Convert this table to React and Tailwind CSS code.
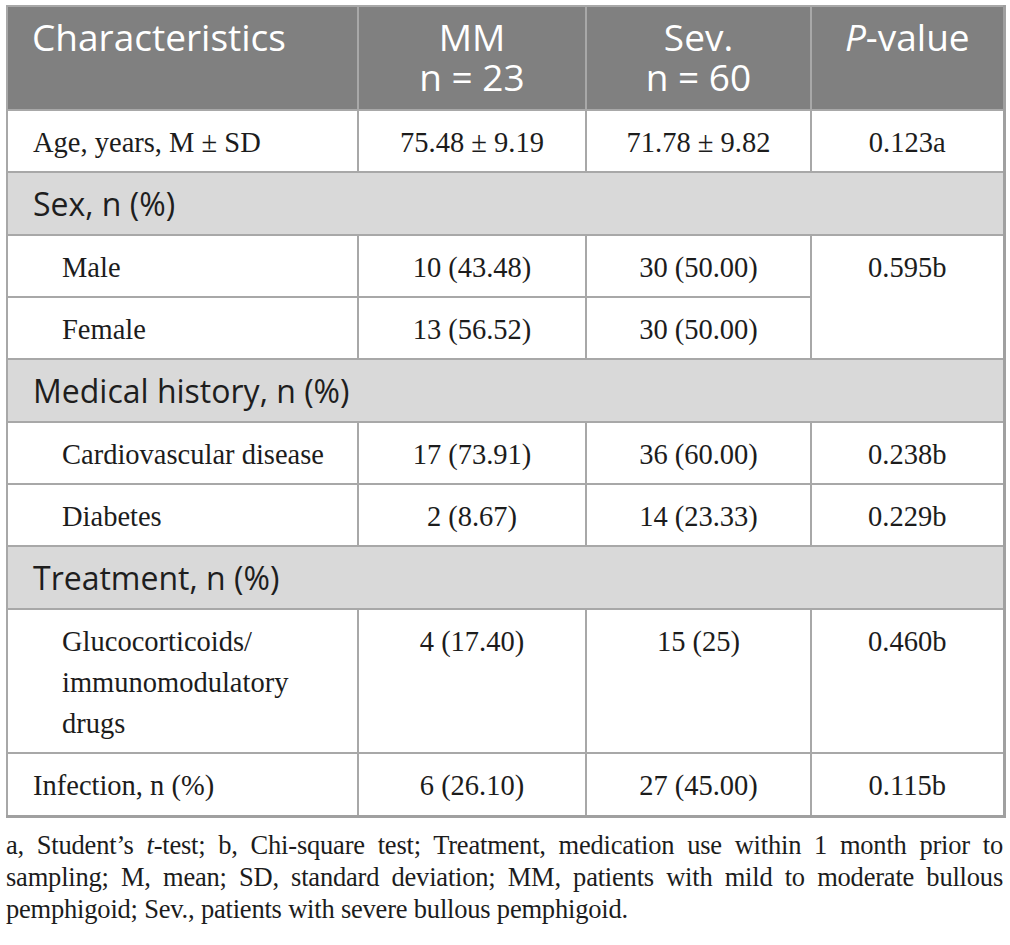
import React from 'react';

const sans = { fontFamily: '"Open Sans", "Noto Sans", sans-serif' };

const rows = [
    { type: 'row', label: 'Age, years, M \u00b1 SD', mm: '75.48 \u00b1 9.19', sev: '71.78 \u00b1 9.82', p: '0.123a' },
    { type: 'section', label: 'Sex, n (%)' },
    { type: 'row', label: 'Male', sub: true, mm: '10 (43.48)', sev: '30 (50.00)', p: '0.595b', span: 2 },
    { type: 'row', label: 'Female', sub: true, mm: '13 (56.52)', sev: '30 (50.00)', skipP: true },
    { type: 'section', label: 'Medical history, n (%)' },
    { type: 'row', label: 'Cardiovascular disease', sub: true, mm: '17 (73.91)', sev: '36 (60.00)', p: '0.238b' },
    { type: 'row', label: 'Diabetes', sub: true, mm: '2 (8.67)', sev: '14 (23.33)', p: '0.229b' },
    { type: 'section', label: 'Treatment, n (%)' },
    { type: 'row', label: 'Glucocorticoids/ immunomodulatory drugs', sub: true, mm: '4 (17.40)', sev: '15 (25)', p: '0.460b' },
    { type: 'row', label: 'Infection, n (%)', mm: '6 (26.10)', sev: '27 (45.00)', p: '0.115b', last: true },
];

const cell = 'border-2 border-[#a8a8a8] align-top pt-[11px] leading-[41px]';
const head = 'border-2 border-[#a8a8a8] font-normal align-top pt-[10px] pb-[12px]';

const App = () => {
    return (
        <div className="bg-white min-h-screen pt-[5px] pl-[6px] pr-[7px] text-[#1c1c1c]">
            <table
                className="table-fixed border-collapse w-[997px] border-r-[3px] border-b-[3px] border-[#a0a0a0] text-[28.5px]"
                style={{ fontFamily: '"Liberation Serif", serif' }}
            >
                <colgroup>
                    <col className="w-[351px]" />
                    <col className="w-[228px]" />
                    <col className="w-[225px]" />
                    <col className="w-[193px]" />
                </colgroup>
                <thead>
                    <tr className="bg-[#808080] text-white text-[37px] leading-[40px]" style={sans}>
                        <th className={`${head} text-left pl-[24px]`}>Characteristics</th>
                        <th className={`${head} text-center`}>MM<br />n = 23</th>
                        <th className={`${head} text-center`}>Sev.<br />n = 60</th>
                        <th className={`${head} text-center`}><i>P</i>-value</th>
                    </tr>
                </thead>
                <tbody>
                    {rows.map((r, i) =>
                        r.type === 'section' ? (
                            <tr key={i} className="bg-[#d9d9d9]">
                                <td colSpan={4} className="border-2 border-[#a8a8a8] pl-[25px] pt-[10px] pb-[10px] leading-[41px] text-[32px] text-[#1e1e1e]" style={sans}>
                                    {r.label}
                                </td>
                            </tr>
                        ) : (
                            <tr key={i}>
                                <td className={`${cell} ${r.last ? 'pb-[9px]' : 'pb-[8px]'} ${r.sub ? 'pl-[54px] pr-[30px]' : 'pl-[25px]'}`}>{r.label}</td>
                                <td className={`${cell} ${r.last ? 'pb-[9px]' : 'pb-[8px]'} text-center`}>{r.mm}</td>
                                <td className={`${cell} ${r.last ? 'pb-[9px]' : 'pb-[8px]'} text-center`}>{r.sev}</td>
                                {!r.skipP && (
                                    <td rowSpan={r.span || 1} className={`${cell} ${r.last ? 'pb-[9px]' : 'pb-[8px]'} text-center`}>{r.p}</td>
                                )}
                            </tr>
                        )
                    )}
                </tbody>
            </table>

            <div className="mt-[11px] w-[997px] text-[26.5px] leading-[32px] text-[#1c1c1c] tracking-[-0.2px]" style={{ fontFamily: '"Liberation Serif", serif' }}>
                <p className="whitespace-nowrap text-justify [text-align-last:justify]">
                    a, Student&rsquo;s <i>t</i>-test; b, Chi-square test; Treatment, medication use within 1 month prior to
                </p>
                <p className="whitespace-nowrap text-justify [text-align-last:justify]">
                    sampling; M, mean; SD, standard deviation; MM, patients with mild to moderate bullous
                </p>
                <p>pemphigoid; Sev., patients with severe bullous pemphigoid.</p>
            </div>
        </div>
    );
};

export default App;
